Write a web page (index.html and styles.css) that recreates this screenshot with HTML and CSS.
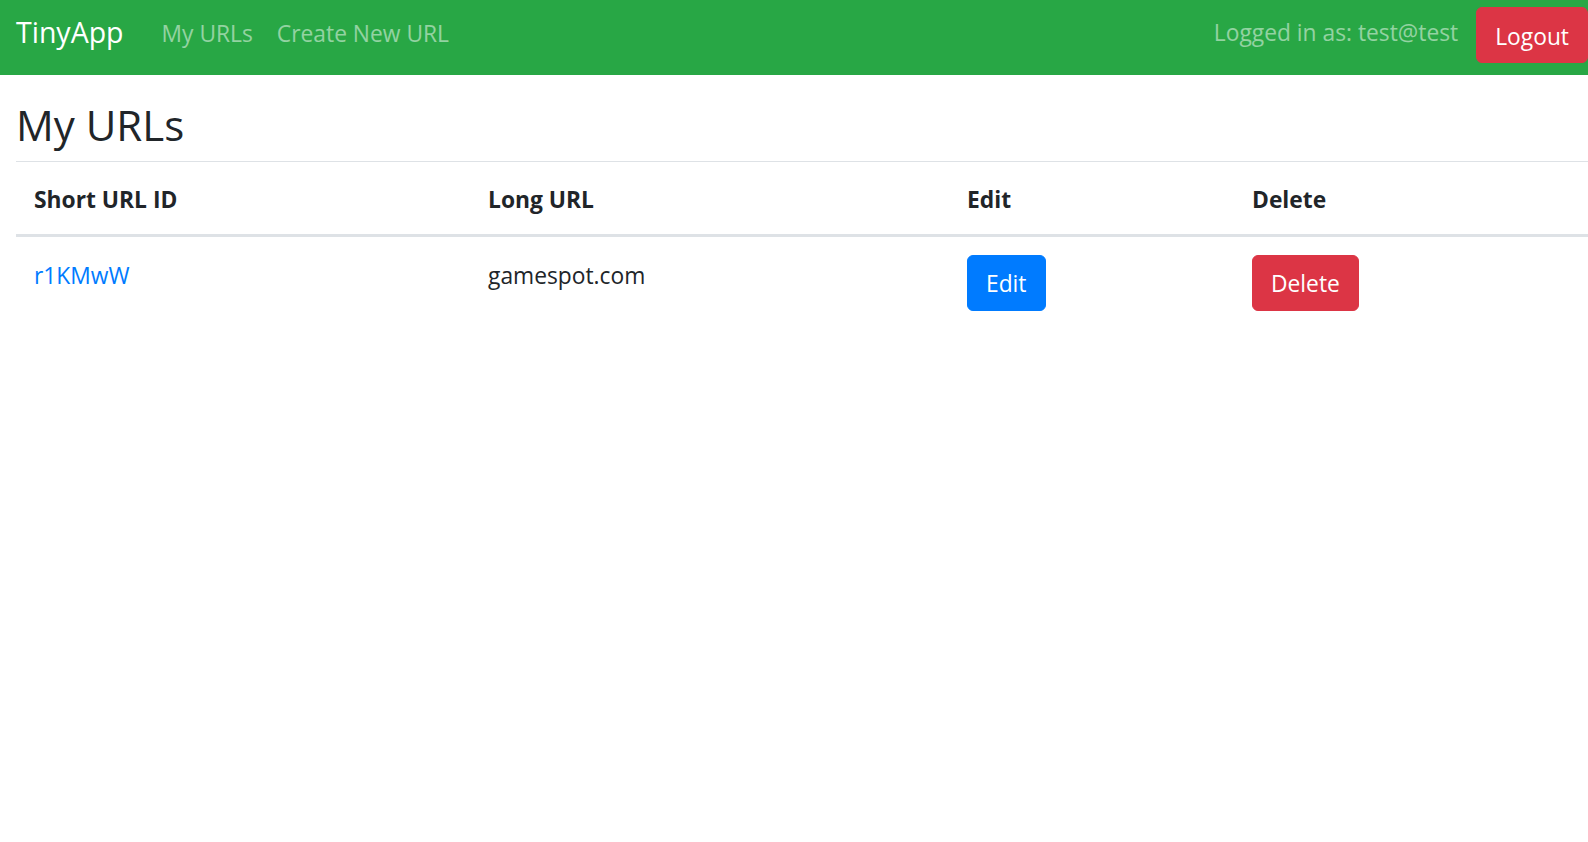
FILE: index.html
```html
<!DOCTYPE html>
<html lang="en">
<head>
<meta charset="utf-8">
<title>TinyApp</title>
<link rel="stylesheet" href="styles.css">
</head>
<body>
<nav class="navbar">
  <a class="brand" href="#">TinyApp</a>
  <div class="nav-links">
    <a class="nav-link" href="#">My URLs</a>
    <a class="nav-link" href="#">Create New URL</a>
  </div>
  <div class="nav-right">
    <span class="nav-text">Logged in as: test@test</span>
    <button class="btn btn-danger btn-logout" type="button">Logout</button>
  </div>
</nav>
<main class="main">
  <h1 class="page-title">My URLs</h1>
  <table class="url-table">
    <colgroup>
      <col class="col-short">
      <col class="col-long">
      <col class="col-edit">
      <col class="col-delete">
    </colgroup>
    <thead>
      <tr>
        <th>Short URL ID</th>
        <th>Long URL</th>
        <th>Edit</th>
        <th>Delete</th>
      </tr>
    </thead>
    <tbody>
      <tr>
        <td class="text-cell"><a class="link" href="#">r1KMwW</a></td>
        <td class="text-cell">gamespot.com</td>
        <td><button class="btn btn-primary" type="button">Edit</button></td>
        <td><button class="btn btn-danger" type="button">Delete</button></td>
      </tr>
    </tbody>
  </table>
</main>
</body>
</html>
```

FILE: styles.css
```css
* {
  box-sizing: border-box;
}

html, body {
  margin: 0;
  padding: 0;
  background: #ffffff;
}

body {
  font-family: "Open Sans", "Noto Sans", "Liberation Sans", sans-serif;
  font-size: 22.8px;
  line-height: 36px;
  color: #212529;
  overflow: hidden;
}

a {
  text-decoration: none;
}

.navbar {
  display: flex;
  align-items: flex-start;
  height: 75px;
  background: #28a745;
  padding: 0 0 0 16px;
}

.brand {
  font-size: 28.5px;
  line-height: 45px;
  color: #ffffff;
  margin-top: 10px;
  margin-right: 26px;
}

.nav-links {
  display: flex;
  margin-top: 16px;
}

.nav-link {
  color: rgba(255, 255, 255, 0.5);
  line-height: 36px;
  padding: 0 12px;
}

.nav-right {
  margin-left: auto;
  display: flex;
  align-items: flex-start;
}

.nav-text {
  color: rgba(255, 255, 255, 0.5);
  line-height: 36px;
  margin-top: 15px;
  margin-right: 18px;
}

.btn {
  display: inline-block;
  font-family: inherit;
  font-size: 22.8px;
  line-height: 36px;
  padding: 10px 18px 8px;
  border: 1px solid transparent;
  border-radius: 6px;
  color: #ffffff;
  cursor: pointer;
}

.btn-primary {
  background: #007bff;
  border-color: #007bff;
}

.btn-danger {
  background: #dc3545;
  border-color: #dc3545;
}

.btn-logout {
  margin-top: 7px;
  padding-top: 11px;
  padding-bottom: 7px;
}

.main {
  padding: 0 0 0 16px;
}

.page-title {
  font-size: 42px;
  font-weight: 400;
  line-height: 50px;
  margin: 25px 0 11px 0;
}

.url-table {
  width: 100%;
  border-collapse: collapse;
  table-layout: fixed;
}

.col-short {
  width: 454px;
}

.col-long {
  width: 479px;
}

.col-edit {
  width: 285px;
}

.url-table th,
.url-table td {
  text-align: left;
  vertical-align: top;
  padding: 20px 18px 16px;
  border-top: 1px solid #dee2e6;
}

.url-table th {
  font-weight: 700;
  border-bottom: 3px solid #dee2e6;
}

.url-table tbody td {
  border-top: none;
  padding-top: 18px;
  padding-bottom: 18px;
}

.url-table tbody td.text-cell {
  padding-top: 21px;
}

.link {
  color: #007bff;
}
```
